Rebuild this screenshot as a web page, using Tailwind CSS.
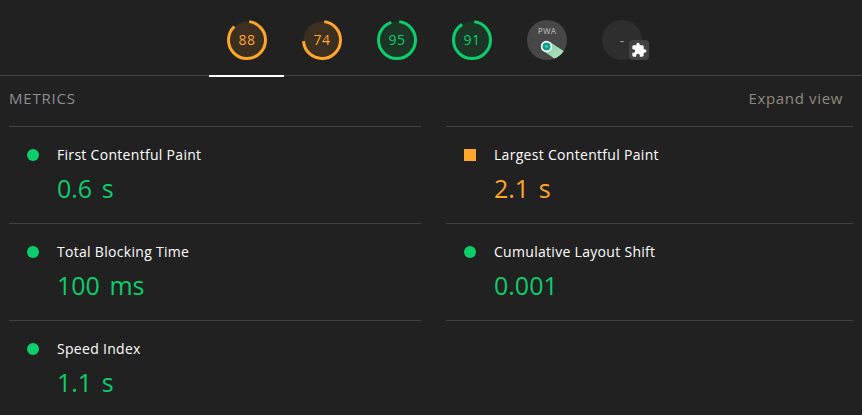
<!DOCTYPE html>
<html lang="en">
<head>
  <meta charset="UTF-8" />
  <title>Lighthouse metrics</title>
  <script src="https://cdn.jsdelivr.net/npm/@tailwindcss/browser@4"></script>
</head>
<body class="bg-[#212121] h-[415px] overflow-hidden font-['Open_Sans','Noto_Sans',sans-serif]">

  <!-- Score tabs -->
  <nav class="h-[76px] border-b border-[#424242] pl-[209px]">
    <div class="flex w-[450px] h-[77px]">
      <div class="w-[75px] h-[77px] pt-5 pl-[18px] border-b-2 border-white">
        <div class="relative w-10 h-10">
          <svg viewBox="0 0 40 40" class="w-10 h-10 -rotate-90">
            <circle cx="20" cy="20" r="18.5" fill="#3a2f21" stroke="none" />
            <circle cx="20" cy="20" r="18.5" fill="none" stroke="#ffa62b" stroke-width="3" pathLength="100" stroke-dasharray="86 100" stroke-dashoffset="-2" />
          </svg>
          <span class="absolute inset-0 flex items-center justify-center text-sm tracking-[0.6px] text-[#ffa62b]">88</span>
        </div>
      </div>
      <div class="w-[75px] pt-5 pl-[18px]">
        <div class="relative w-10 h-10">
          <svg viewBox="0 0 40 40" class="w-10 h-10 -rotate-90">
            <circle cx="20" cy="20" r="18.5" fill="#3a2f21" stroke="none" />
            <circle cx="20" cy="20" r="18.5" fill="none" stroke="#ffa62b" stroke-width="3" pathLength="100" stroke-dasharray="72 100" stroke-dashoffset="-2" />
          </svg>
          <span class="absolute inset-0 flex items-center justify-center text-sm tracking-[0.6px] text-[#ffa62b]">74</span>
        </div>
      </div>
      <div class="w-[75px] pt-5 pl-[18px]">
        <div class="relative w-10 h-10">
          <svg viewBox="0 0 40 40" class="w-10 h-10 -rotate-90">
            <circle cx="20" cy="20" r="18.5" fill="#1c3527" stroke="none" />
            <circle cx="20" cy="20" r="18.5" fill="none" stroke="#0cce6b" stroke-width="3" pathLength="100" stroke-dasharray="93 100" stroke-dashoffset="-2" />
          </svg>
          <span class="absolute inset-0 flex items-center justify-center text-sm tracking-[0.6px] text-[#0cce6b]">95</span>
        </div>
      </div>
      <div class="w-[75px] pt-5 pl-[18px]">
        <div class="relative w-10 h-10">
          <svg viewBox="0 0 40 40" class="w-10 h-10 -rotate-90">
            <circle cx="20" cy="20" r="18.5" fill="#1c3527" stroke="none" />
            <circle cx="20" cy="20" r="18.5" fill="none" stroke="#0cce6b" stroke-width="3" pathLength="100" stroke-dasharray="89 100" stroke-dashoffset="-2" />
          </svg>
          <span class="absolute inset-0 flex items-center justify-center text-sm tracking-[0.6px] text-[#0cce6b]">91</span>
        </div>
      </div>
      <div class="w-[75px] pt-5 pl-[18px]">
        <div class="relative w-10 h-10 rounded-full bg-[#474747] overflow-hidden">
          <span class="absolute top-[6px] inset-x-0 text-center text-[8px] leading-[10px] font-semibold tracking-[0.2px] text-[#a8a8a8]">PWA</span>
          <svg viewBox="0 0 40 40" class="absolute inset-0 w-10 h-10">
            <defs>
              <linearGradient id="pwaTail" x1="0.1" y1="0.1" x2="0.9" y2="0.9">
                <stop offset="0" stop-color="#7fcf9c" />
                <stop offset="1" stop-color="#b5e3c4" />
              </linearGradient>
            </defs>
            <path d="M23 22 L38 32 L28 39 L15 30 Z" fill="url(#pwaTail)" />
            <circle cx="19.5" cy="26.5" r="5.7" fill="#fff" />
            <circle cx="19.5" cy="26.5" r="4" fill="#0aa08c" />
            <circle cx="19.5" cy="26.5" r="1.4" fill="#5cc4b4" />
          </svg>
        </div>
      </div>
      <div class="w-[75px] pt-5 pl-[18px]">
        <div class="relative w-10 h-10">
          <div class="w-10 h-10 pt-px rounded-full bg-[#2e2e2e] flex items-center justify-center text-sm text-[#a0a0a0]">-</div>
          <div class="absolute left-[27px] top-5 w-5 h-5 rounded-[4px] bg-[#424242] flex items-center justify-center">
            <svg viewBox="0 0 24 24" class="w-4 h-4" fill="#fff">
              <path d="M20.5 11H19V7c0-1.1-.9-2-2-2h-4V3.5C13 2.12 11.88 1 10.5 1S8 2.12 8 3.5V5H4c-1.1 0-1.99.9-1.99 2v3.8H3.5c1.49 0 2.7 1.21 2.7 2.7s-1.21 2.7-2.7 2.7H2V20c0 1.1.9 2 2 2h3.8v-1.5c0-1.49 1.21-2.7 2.7-2.7 1.49 0 2.7 1.21 2.7 2.7V22H17c1.1 0 2-.9 2-2v-4h1.5c1.38 0 2.5-1.12 2.5-2.5S21.88 11 20.5 11z" />
            </svg>
          </div>
        </div>
      </div>
    </div>
  </nav>

  <!-- Metrics -->
  <section class="pl-[9px] pr-[9px]">
    <div class="h-[50px] pb-[6px] pr-[10px] flex items-center justify-between">
      <h2 class="text-[15px] tracking-[0.8px] text-[#8f8f8f]">METRICS</h2>
      <button class="text-[15px] tracking-[0.65px] text-[#8f8a80]">Expand view</button>
    </div>

    <div class="grid grid-cols-[412px_407px] gap-x-[25px]">
      <div class="h-[97px] border-t border-[#424242] pl-[18px] pt-[16px]">
        <div class="flex items-center gap-[18px] h-[24px]">
          <span class="w-3 h-3 rounded-full bg-[#0cce6b]"></span>
          <span class="text-sm tracking-[0.3px] text-white">First Contentful Paint</span>
        </div>
        <p class="pl-[30px] mt-[3px] text-[25px] leading-[36px] [word-spacing:3px] text-[#0cce6b]">0.6 s</p>
      </div>
      <div class="h-[97px] border-t border-[#424242] pl-[18px] pt-[16px]">
        <div class="flex items-center gap-[18px] h-[24px]">
          <span class="w-3 h-3 bg-[#ffa62b]"></span>
          <span class="text-sm tracking-[0.3px] text-white">Largest Contentful Paint</span>
        </div>
        <p class="pl-[30px] mt-[3px] text-[25px] leading-[36px] [word-spacing:3px] text-[#ffa62b]">2.1 s</p>
      </div>
      <div class="h-[97px] border-t border-[#424242] pl-[18px] pt-[16px]">
        <div class="flex items-center gap-[18px] h-[24px]">
          <span class="w-3 h-3 rounded-full bg-[#0cce6b]"></span>
          <span class="text-sm tracking-[0.3px] text-white">Total Blocking Time</span>
        </div>
        <p class="pl-[30px] mt-[3px] text-[25px] leading-[36px] [word-spacing:3px] text-[#0cce6b]">100 ms</p>
      </div>
      <div class="h-[97px] border-t border-[#424242] pl-[18px] pt-[16px]">
        <div class="flex items-center gap-[18px] h-[24px]">
          <span class="w-3 h-3 rounded-full bg-[#0cce6b]"></span>
          <span class="text-sm tracking-[0.3px] text-white">Cumulative Layout Shift</span>
        </div>
        <p class="pl-[30px] mt-[3px] text-[25px] leading-[36px] [word-spacing:3px] text-[#0cce6b]">0.001</p>
      </div>
      <div class="h-[97px] border-t border-[#424242] pl-[18px] pt-[16px]">
        <div class="flex items-center gap-[18px] h-[24px]">
          <span class="w-3 h-3 rounded-full bg-[#0cce6b]"></span>
          <span class="text-sm tracking-[0.3px] text-white">Speed Index</span>
        </div>
        <p class="pl-[30px] mt-[3px] text-[25px] leading-[36px] [word-spacing:3px] text-[#0cce6b]">1.1 s</p>
      </div>
      <div class="h-[97px] border-t border-[#424242]"></div>
    </div>
  </section>
</body>
</html>
